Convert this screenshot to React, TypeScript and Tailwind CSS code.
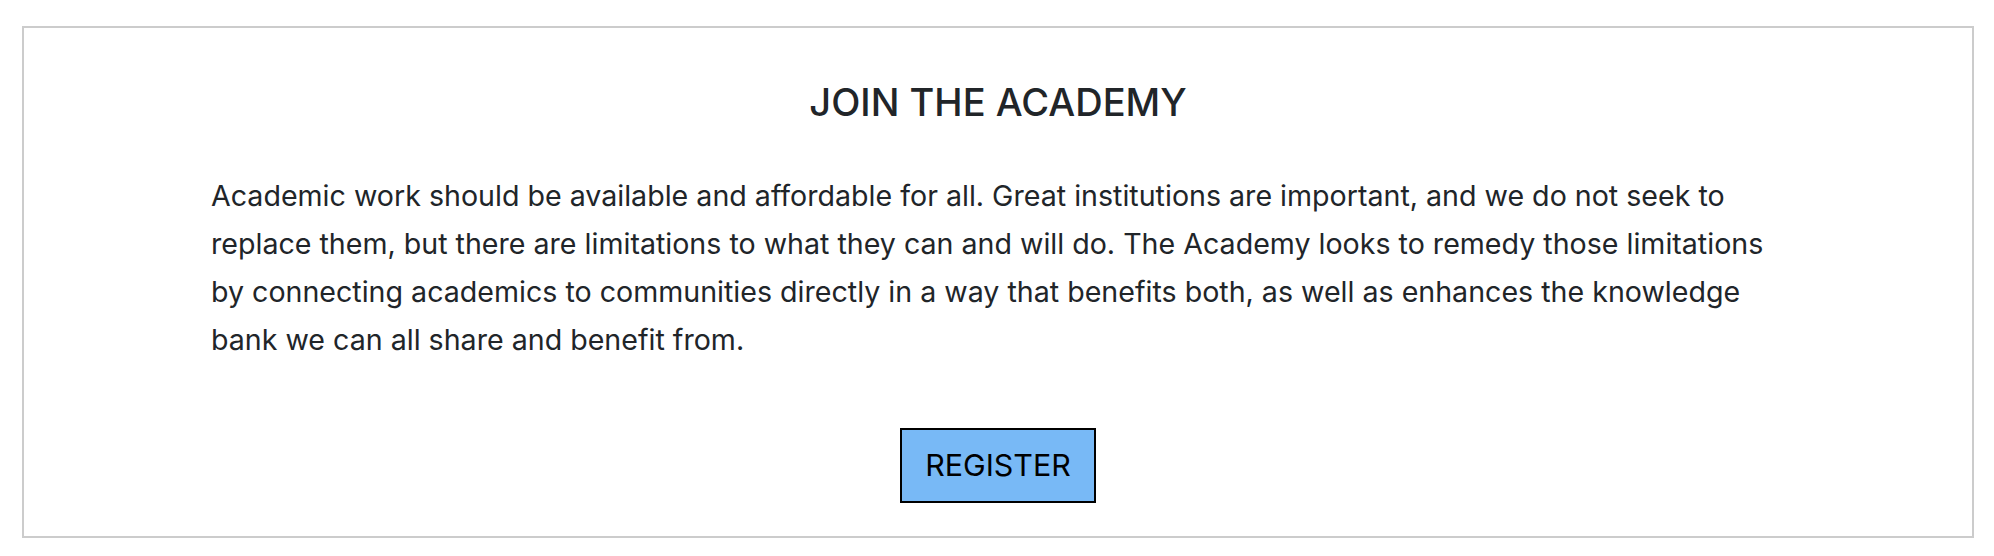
const App = () => {
  return (
    <div className="min-h-screen bg-white pt-[26px] pl-[22px] pr-[20px] font-['Inter',sans-serif]">
      <section className="border-2 border-[#cccccc] pt-[51px] pb-[33px] flex flex-col items-center">
        <h1 className="text-[38px] leading-[46px] font-medium text-[#212529]">
          JOIN THE ACADEMY
        </h1>
        <p className="w-[1574px] mt-[47px] text-[28.6px] leading-[48px] text-[#212529]">
          Academic work should be available and affordable for all. Great
          institutions are important, and we do not seek to replace them, but
          there are limitations to what they can and will do. The Academy looks
          to remedy those limitations by connecting academics to communities
          directly in a way that benefits both, as well as enhances the
          knowledge bank we can all share and benefit from.
        </p>
        <button className="mt-[64px] border-2 border-black bg-[#78b9f6] px-[23px] py-[14px] text-[30.4px] leading-[43px] text-black">
          REGISTER
        </button>
      </section>
    </div>
  );
};

export default App;
